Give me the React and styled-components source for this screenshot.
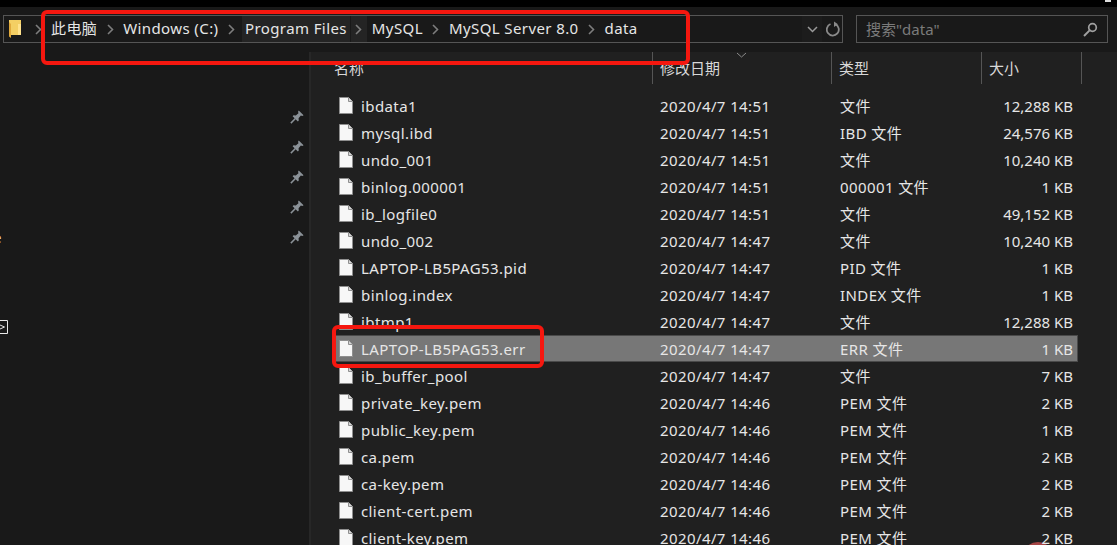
import React from 'react';
import styled, { createGlobalStyle } from 'styled-components';

const GlobalStyle = createGlobalStyle`
    html, body {
        margin: 0;
        background: #191919;
        overflow: hidden;
    }
    * {
        box-sizing: border-box;
    }
`

const FONT = `"Noto Sans", "Noto Sans CJK SC", sans-serif`

//window
const Page = styled.div`
    position: relative;
    width: 1117px;
    height: 545px;
    overflow: hidden;
    background: #191919;
    color: #e6e6e6;
    font-family: ${FONT};
    font-size: 15px;
`

const TitleStrip = styled.div`
    height: 7px;
    background: #000;
    display: flex;
    justify-content: flex-end;
    padding-right: 6px;
`

const TitleGlint = styled.span`
    width: 6px;
    height: 2px;
    background: #ddd;
`

//address row
const Toolbar = styled.div`
    height: 45px;
    padding: 8px 9px 9px 3px;
    display: flex;
    gap: 13px;
`

const AddressBox = styled.div`
    width: 840px;
    border: 1px solid #555;
    display: flex;
    align-items: stretch;
`

const Crumbs = styled.div`
    flex: 1;
    display: flex;
    align-items: center;
    padding-left: 5px;
    letter-spacing: 0.4px;
`

const FolderSlot = styled.div`
    width: 20px;
    display: flex;
    align-items: center;
    margin-right: 1px;
`

const Crumb = styled.div`
    height: 100%;
    padding: 0 ${pr => pr.$hot ? '3px' : '5px'} 3px ${pr => pr.$hot ? '3px' : '5px'};
    margin-left: ${pr => pr.$hot ? '2.5px' : '0'};
    display: flex;
    align-items: center;
    white-space: nowrap;
    background: ${pr => pr.$hot ? '#242424' : 'transparent'};
`

const Sep = styled.div`
    width: 16px;
    height: 100%;
    display: flex;
    align-items: center;
    justify-content: center;
    margin-left: ${pr => pr.$hot ? '1px' : '0'};
    background: ${pr => pr.$hot ? '#242424' : 'transparent'};
`

const DropSlot = styled.div`
    width: 20px;
    display: flex;
    align-items: center;
    justify-content: center;
    background: #1c1c1c;
`

const RefreshSlot = styled.div`
    width: 20px;
    display: flex;
    align-items: center;
    justify-content: flex-end;
    padding-right: 1px;
`

const SearchBox = styled.div`
    flex: 1;
    border: 1px solid #555;
    display: flex;
    align-items: center;
    justify-content: space-between;
    padding: 0 9px;
    color: #7b7b7b;
`

const SearchText = styled.span`
    padding-bottom: 2px;
`

//body
const Body = styled.div`
    height: 493px;
    display: flex;
`

const Sidebar = styled.div`
    width: 309px;
    padding-top: 50px;
    background: #191919;
    overflow: hidden;
`

const NavRow = styled.div`
    height: 30px;
    padding-right: 5px;
    display: flex;
    align-items: center;
    justify-content: space-between;
`

const NavLabel = styled.span`
    margin-left: -7px;
    color: #f0e0d0;
`

const Main = styled.div`
    flex: 1;
    background: #202020;
    border-left: 2px solid #272727;
    overflow: hidden;
`

const HeaderRow = styled.div`
    height: 32px;
    display: grid;
    grid-template-columns: 342px 179px 150px 100px;
`

const HeaderCell = styled.div`
    position: relative;
    padding-left: ${pr => pr.$first ? '23px' : '7px'};
    padding-top: 5px;
    border-right: 1px solid #555;
    color: #d8d8d8;
`

const SortMark = styled.svg`
    position: absolute;
    top: 0;
    left: 83px;
`

const FileList = styled.div`
    padding: 8px 0 0 22px;
`

const FileRow = styled.div`
    position: relative;
    width: 745px;
    height: 27px;
    display: grid;
    grid-template-columns: 327px 180px 150px 83px;
    align-items: center;
    background: ${pr => pr.$selected ? '#777' : 'transparent'};
    box-shadow: ${pr => pr.$selected ? 'inset 0 0 0 1px #4a4a4a' : 'none'};
    white-space: nowrap;
    letter-spacing: 0.4px;
`

const NameCell = styled.div`
    display: flex;
    align-items: center;
    gap: 8px;
    padding-left: 6px;
`

const SizeCell = styled.div`
    text-align: right;
    letter-spacing: 0;
`

//red marker drawn on top of the screenshot
const Marker = styled.div`
    position: absolute;
    left: ${pr => pr.$x}px;
    top: ${pr => pr.$y}px;
    width: ${pr => pr.$w}px;
    height: ${pr => pr.$h}px;
    border: 4px solid #f5170f;
    border-radius: 6px;
`

const Blot = styled.div`
    position: absolute;
    left: 1022px;
    top: 542px;
    width: 32px;
    height: 32px;
    border-radius: 50%;
    background: #a54545;
`

//icons
const FolderIcon = () => (
    <svg width="13" height="18" viewBox="0 0 13 18">
        <path d="M0 0H12V15H2L0 13Z" fill="#f4cf63" />
        <path d="M0 2V16.5L2 18V4Z" fill="#e0a93c" />
        <path d="M9 4H12V15H9Z" fill="#ffe28c" />
    </svg>
)

const Chevron = ({ color = '#7d7d7d' }) => (
    <svg width="7" height="11" viewBox="0 0 7 11">
        <path d="M1 1L5.5 5.5L1 10" fill="none" stroke={color} strokeWidth="1.6" />
    </svg>
)

const DownChevron = () => (
    <svg width="11" height="7" viewBox="0 0 11 7">
        <path d="M1 1L5.5 5.5L10 1" fill="none" stroke="#9a9a9a" strokeWidth="1.5" />
    </svg>
)

const RefreshIcon = () => (
    <svg width="15" height="16" viewBox="0 0 15 16">
        <path d="M9.5 3.2A6 6 0 1 1 4.5 3" fill="none" stroke="#8a8a8a" strokeWidth="1.8" />
        <path d="M8 0.5V6L12 3.2Z" fill="#8a8a8a" />
    </svg>
)

const SearchIcon = () => (
    <svg width="15" height="15" viewBox="0 0 15 15">
        <circle cx="9.5" cy="5.5" r="3.8" fill="none" stroke="#a0a0a0" strokeWidth="1.7" />
        <path d="M6.6 8.4L1 14" stroke="#a0a0a0" strokeWidth="2" />
    </svg>
)

const PinIcon = () => (
    <svg width="14" height="14" viewBox="0 0 16 16">
        <path d="M10 0.5L15.5 6L14 6.8L12.4 6.3L9.8 9.4L10 12L9 13L3 7L4 6L6.6 6.2L9.7 3.6L9.2 2Z" fill="#8b9298" />
        <path d="M6.2 9.8L1 15" stroke="#8b9298" strokeWidth="1.7" />
    </svg>
)

const FileIcon = () => (
    <svg width="14" height="17" viewBox="0 0 14 17">
        <path d="M0.5 0.5H9.5L13.5 4.5V16.5H0.5Z" fill="#f7f7f7" stroke="#8f8f8f" />
        <path d="M9.5 0.5V4.5H13.5" fill="#d6d6d6" stroke="#8f8f8f" />
    </svg>
)

const ShortcutStub = () => (
    <svg width="8" height="14" viewBox="0 0 8 14">
        <path d="M0 0.5H7.5V13.5H0" fill="none" stroke="#e8e8e8" />
        <path d="M0 5L4.5 7L0 9" fill="none" stroke="#e8e8e8" />
    </svg>
)

//data
const crumbs = ['此电脑', 'Windows (C:)', 'Program Files', 'MySQL', 'MySQL Server 8.0', 'data']

const files = [
    ['ibdata1', '14:51', '文件', '12,288 KB'],
    ['mysql.ibd', '14:51', 'IBD 文件', '24,576 KB'],
    ['undo_001', '14:51', '文件', '10,240 KB'],
    ['binlog.000001', '14:51', '000001 文件', '1 KB'],
    ['ib_logfile0', '14:51', '文件', '49,152 KB'],
    ['undo_002', '14:47', '文件', '10,240 KB'],
    ['LAPTOP-LB5PAG53.pid', '14:47', 'PID 文件', '1 KB'],
    ['binlog.index', '14:47', 'INDEX 文件', '1 KB'],
    ['ibtmp1', '14:47', '文件', '12,288 KB'],
    ['LAPTOP-LB5PAG53.err', '14:47', 'ERR 文件', '1 KB'],
    ['ib_buffer_pool', '14:47', '文件', '7 KB'],
    ['private_key.pem', '14:46', 'PEM 文件', '2 KB'],
    ['public_key.pem', '14:46', 'PEM 文件', '1 KB'],
    ['ca.pem', '14:46', 'PEM 文件', '2 KB'],
    ['ca-key.pem', '14:46', 'PEM 文件', '2 KB'],
    ['client-cert.pem', '14:46', 'PEM 文件', '2 KB'],
    ['client-key.pem', '14:46', 'PEM 文件', '2 KB'],
]

//********************************************* */
function App() {
    return (
        <Page>
            <GlobalStyle />
            <Blot />
            <TitleStrip><TitleGlint /></TitleStrip>

            <Toolbar>
                <AddressBox>
                    <Crumbs>
                        <FolderSlot><FolderIcon /></FolderSlot>
                        <Sep><Chevron /></Sep>
                        {crumbs.map((name, i) => (
                            <React.Fragment key={name}>
                                <Crumb $hot={name === 'Program Files'}>{name}</Crumb>
                                {i < crumbs.length - 1 && (
                                    <Sep $hot={name === 'Program Files'}><Chevron /></Sep>
                                )}
                            </React.Fragment>
                        ))}
                    </Crumbs>
                    <DropSlot><DownChevron /></DropSlot>
                    <RefreshSlot><RefreshIcon /></RefreshSlot>
                </AddressBox>
                <SearchBox>
                    <SearchText>搜索"data"</SearchText>
                    <SearchIcon />
                </SearchBox>
            </Toolbar>

            <Body>
                <Sidebar>
                    <NavRow><span /><PinIcon /></NavRow>
                    <NavRow><span /><PinIcon /></NavRow>
                    <NavRow><span /><PinIcon /></NavRow>
                    <NavRow><span /><PinIcon /></NavRow>
                    <NavRow><NavLabel>e</NavLabel><PinIcon /></NavRow>
                    <NavRow />
                    <NavRow />
                    <NavRow><ShortcutStub /></NavRow>
                </Sidebar>

                <Main>
                    <HeaderRow>
                        <HeaderCell $first>名称</HeaderCell>
                        <HeaderCell>
                            <SortMark width="11" height="6" viewBox="0 0 11 6">
                                <path d="M1 1L5.5 5L10 1" fill="none" stroke="#8a8a8a" />
                            </SortMark>
                            修改日期
                        </HeaderCell>
                        <HeaderCell>类型</HeaderCell>
                        <HeaderCell>大小</HeaderCell>
                    </HeaderRow>
                    <FileList>
                        {files.map(f => (
                            <FileRow key={f[0]} $selected={f[0].endsWith('.err')}>
                                <NameCell><FileIcon />{f[0]}</NameCell>
                                <div>2020/4/7 {f[1]}</div>
                                <div>{f[2]}</div>
                                <SizeCell>{f[3]}</SizeCell>
                            </FileRow>
                        ))}
                    </FileList>
                </Main>
            </Body>

            <Marker $x={41} $y={10} $w={649} $h={55} />
            <Marker $x={332} $y={325} $w={212} $h={43} />
        </Page>
    )
}

export default App;
